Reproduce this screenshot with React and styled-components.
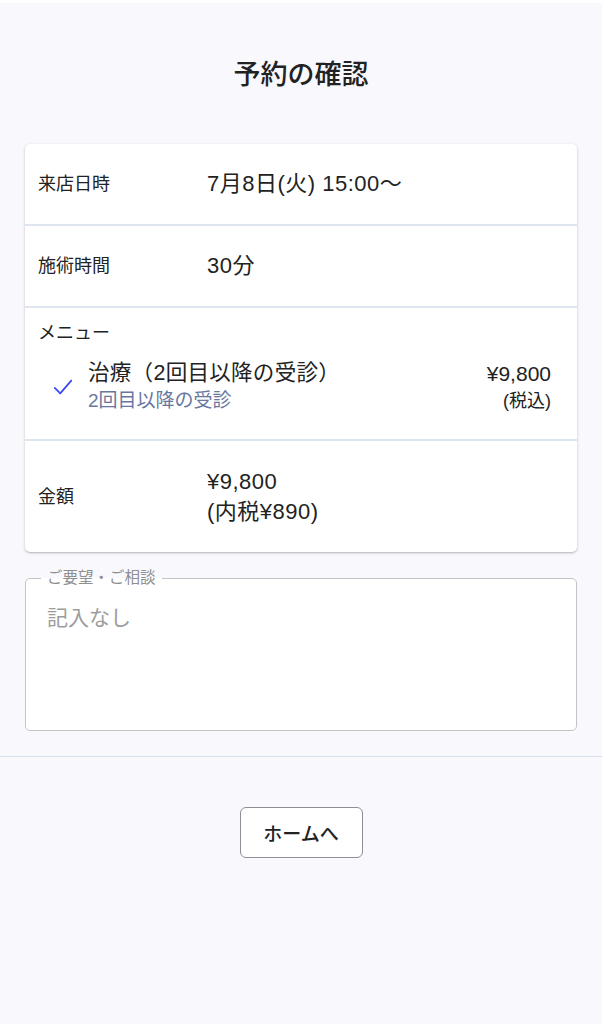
import React from "react";
import styled, { createGlobalStyle } from "styled-components";

const GlobalStyle = createGlobalStyle`
  html, body {
    margin: 0;
    padding: 0;
    background: #f8f8fd;
  }
  body {
    font-family: "Liberation Sans", "Noto Sans CJK JP", sans-serif;
    color: #222;
  }
`;

const Page = styled.div`
  min-height: 1024px;
  border-top: 3px solid #ffffff;
  box-sizing: border-box;
  display: flex;
  flex-direction: column;
`;

const Title = styled.h1`
  margin: 0;
  padding: 52px 0 0;
  height: 141px;
  box-sizing: border-box;
  text-align: center;
  font-size: 27px;
  font-weight: 500;
  line-height: 40px;
  color: #222;
`;

const Main = styled.div`
  padding: 0 25px 25px;
  display: flex;
  flex-direction: column;
  gap: 17px;
`;

const Card = styled.div`
  background: #fff;
  border-radius: 5px;
  box-shadow: 0 1px 3px rgba(0, 0, 0, 0.22), 0 1px 1px rgba(0, 0, 0, 0.08);
`;

const Row = styled.div`
  display: flex;
  align-items: center;
  box-sizing: border-box;
  min-height: ${(p) => p.$h}px;
  padding: 0 13px;
  border-top: ${(p) => (p.$first ? "none" : "2px solid #dde6ef")};
`;

const Label = styled.div`
  width: 169px;
  font-size: 18px;
  line-height: 26px;
`;

const Value = styled.div`
  font-size: 22px;
  line-height: 30px;
  letter-spacing: 0.5px;
`;

const MenuBlock = styled.div`
  padding: 13px 26px 24px 13px;
  border-top: 2px solid #dde6ef;
`;

const MenuTitle = styled.div`
  font-size: 18px;
  line-height: 24px;
`;

const MenuItem = styled.div`
  display: flex;
  align-items: center;
  margin-top: 14px;
`;

const Check = styled.svg`
  width: 22px;
  height: 22px;
  margin: 0 14px 0 14px;
  flex-shrink: 0;
`;

const ItemText = styled.div`
  flex: 1;
`;

const ItemName = styled.div`
  font-size: 21.5px;
  line-height: 28px;
  letter-spacing: 0.3px;
`;

const ItemSub = styled.div`
  font-size: 19px;
  line-height: 28px;
  color: #6877a0;
`;

const Price = styled.div`
  text-align: right;
`;

const PriceMain = styled.div`
  font-size: 21px;
  line-height: 28px;
`;

const PriceNote = styled.div`
  font-size: 18px;
  line-height: 26px;
`;

const Field = styled.fieldset`
  margin: 0;
  padding: 0 21px;
  border: 1.5px solid #c4c4c4;
  border-radius: 5px;
  background: #fff;
  height: 162px;
  box-sizing: border-box;
`;

const Legend = styled.legend`
  font-size: 15.5px;
  line-height: 18px;
  color: #8f8f8f;
  padding: 0 6px;
  margin-left: -6px;
`;

const Placeholder = styled.div`
  margin-top: 16px;
  font-size: 21px;
  line-height: 30px;
  color: #9c9c9c;
`;

const Divider = styled.hr`
  margin: 0;
  border: 0;
  border-top: 1px solid #d6e3ee;
`;

const Footer = styled.div`
  display: flex;
  justify-content: center;
  padding-top: 50px;
`;

const Button = styled.button`
  width: 123px;
  height: 51px;
  background: #fff;
  border: 1.5px solid #8e8e96;
  border-radius: 6px;
  font-family: inherit;
  font-size: 19px;
  font-weight: 500;
  color: #222;
  cursor: pointer;
`;

export default function App() {
  return (
    <>
      <GlobalStyle />
      <Page>
        <Title>予約の確認</Title>
        <Main>
          <Card>
            <Row $first $h={80}>
              <Label>来店日時</Label>
              <Value>7月8日(火) 15:00〜</Value>
            </Row>
            <Row $h={82}>
              <Label>施術時間</Label>
              <Value>30分</Value>
            </Row>
            <MenuBlock>
              <MenuTitle>メニュー</MenuTitle>
              <MenuItem>
                <Check viewBox="0 0 24 24" fill="none" stroke="#3d4cf0" strokeWidth="2" strokeLinecap="round" strokeLinejoin="round">
                  <polyline points="3 13 9 19 21 5" />
                </Check>
                <ItemText>
                  <ItemName>治療（2回目以降の受診）</ItemName>
                  <ItemSub>2回目以降の受診</ItemSub>
                </ItemText>
                <Price>
                  <PriceMain>¥9,800</PriceMain>
                  <PriceNote>(税込)</PriceNote>
                </Price>
              </MenuItem>
            </MenuBlock>
            <Row $h={113}>
              <Label>金額</Label>
              <Value>
                ¥9,800
                <br />
                (内税¥890)
              </Value>
            </Row>
          </Card>
          <Field>
            <Legend>ご要望・ご相談</Legend>
            <Placeholder>記入なし</Placeholder>
          </Field>
        </Main>
        <Divider />
        <Footer>
          <Button>ホームへ</Button>
        </Footer>
      </Page>
    </>
  );
}
